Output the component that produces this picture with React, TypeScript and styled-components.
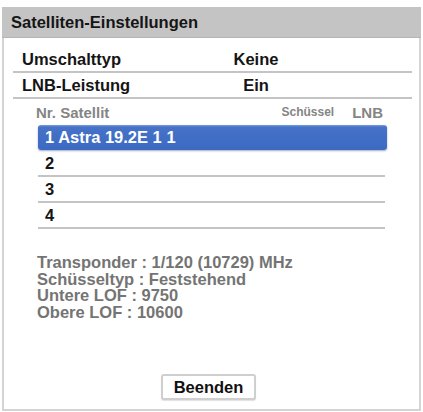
import styled, { createGlobalStyle } from "styled-components";

const GlobalStyle = createGlobalStyle`
  html, body {
    margin: 0;
    padding: 0;
    background: #ffffff;
  }
  body {
    font-family: "Liberation Sans", Arial, sans-serif;
  }
`;

const Page = styled.div`
  width: 423px;
  height: 412px;
  padding: 7px 2px 1px 2px;
  box-sizing: border-box;
`;

const Dialog = styled.div`
  height: 100%;
  display: flex;
  flex-direction: column;
  box-sizing: border-box;
`;

const Header = styled.div`
  height: 30px;
  display: flex;
  align-items: center;
  padding-left: 9px;
  background: #c4c4c4;
  border-bottom: 1px solid #b4b4b4;
  font-size: 16.5px;
  font-weight: bold;
  color: #151515;
`;

const Body = styled.div`
  flex: 1;
  display: flex;
  flex-direction: column;
  border: 2px solid #d4d4d4;
  border-top: none;
  padding: 9px 7px 0 9px;
`;

const SettingRow = styled.div`
  height: 24px;
  display: grid;
  grid-template-columns: 178px 130px;
  align-items: center;
  border-bottom: 2px solid #c4c4c4;
  font-size: 16.5px;
  font-weight: bold;
  color: #151515;
`;

const Label = styled.span`
  padding-left: 9px;
`;

const Value = styled.span`
  text-align: center;
`;

const ListHeader = styled.div`
  height: 26px;
  display: flex;
  align-items: center;
  margin: 0 29px 0 23px;
  font-weight: bold;
  color: #858585;
`;

const HeadCell = styled.span<{ $size: number; $grow?: boolean; $gap?: number }>`
  font-size: ${(p) => p.$size}px;
  flex: ${(p) => (p.$grow ? 1 : "none")};
  margin-left: ${(p) => p.$gap ?? 0}px;
`;

const List = styled.div`
  display: flex;
  flex-direction: column;
  margin: 0 25px 0 25px;
`;

const ListRow = styled.div<{ $selected?: boolean }>`
  height: ${(p) => (p.$selected ? 25 : 24)}px;
  display: flex;
  align-items: center;
  padding-left: 7px;
  font-size: 16.5px;
  font-weight: bold;
  color: ${(p) => (p.$selected ? "#ffffff" : "#151515")};
  border-radius: ${(p) => (p.$selected ? "3px" : "0")};
  background: ${(p) =>
    p.$selected ? "linear-gradient(#7aa0dc 0, #4673c8 2px, #3c69c2 100%)" : "transparent"};
  box-shadow: ${(p) => (p.$selected ? "0 1px 2px rgba(40, 70, 130, 0.45)" : "none")};
  border-bottom: ${(p) => (p.$selected ? "none" : "2px solid #c4c4c4")};
  margin-right: ${(p) => (p.$selected ? 0 : 2)}px;
  margin-bottom: ${(p) => (p.$selected ? 1 : 0)}px;
`;

const Info = styled.div`
  margin: 25px 0 0 24px;
  display: flex;
  flex-direction: column;
  font-size: 16.5px;
  font-weight: bold;
  line-height: 16.5px;
  color: #747474;
`;

const Footer = styled.div`
  flex: 1;
  display: flex;
  justify-content: center;
  align-items: flex-end;
  padding-bottom: 9px;
  margin-left: -8px;
`;

const Button = styled.button`
  width: 95px;
  height: 26px;
  padding: 0;
  font-family: "Liberation Sans", Arial, sans-serif;
  font-size: 16.5px;
  font-weight: bold;
  color: #111111;
  background: #ffffff;
  border: 2px solid #cfcfcf;
  border-radius: 3px;
  box-shadow: 0 1px 1px rgba(0, 0, 0, 0.12);
`;

const satellites = ["1 Astra 19.2E 1 1", "2", "3", "4"];

const info = [
  "Transponder : 1/120 (10729) MHz",
  "Schüsseltyp : Feststehend",
  "Untere LOF : 9750",
  "Obere LOF : 10600",
];

export default function App() {
  return (
    <>
      <GlobalStyle />
      <Page>
        <Dialog>
          <Header>Satelliten-Einstellungen</Header>
          <Body>
            <SettingRow>
              <Label>Umschalttyp</Label>
              <Value>Keine</Value>
            </SettingRow>
            <SettingRow>
              <Label>LNB-Leistung</Label>
              <Value>Ein</Value>
            </SettingRow>
            <ListHeader>
              <HeadCell $size={15} $grow>
                Nr. Satellit
              </HeadCell>
              <HeadCell $size={12}>Schüssel</HeadCell>
              <HeadCell $size={15} $gap={18}>
                LNB
              </HeadCell>
            </ListHeader>
            <List>
              {satellites.map((s, i) => (
                <ListRow key={s} $selected={i === 0}>
                  {s}
                </ListRow>
              ))}
            </List>
            <Info>
              {info.map((line) => (
                <span key={line}>{line}</span>
              ))}
            </Info>
            <Footer>
              <Button>Beenden</Button>
            </Footer>
          </Body>
        </Dialog>
      </Page>
    </>
  );
}
